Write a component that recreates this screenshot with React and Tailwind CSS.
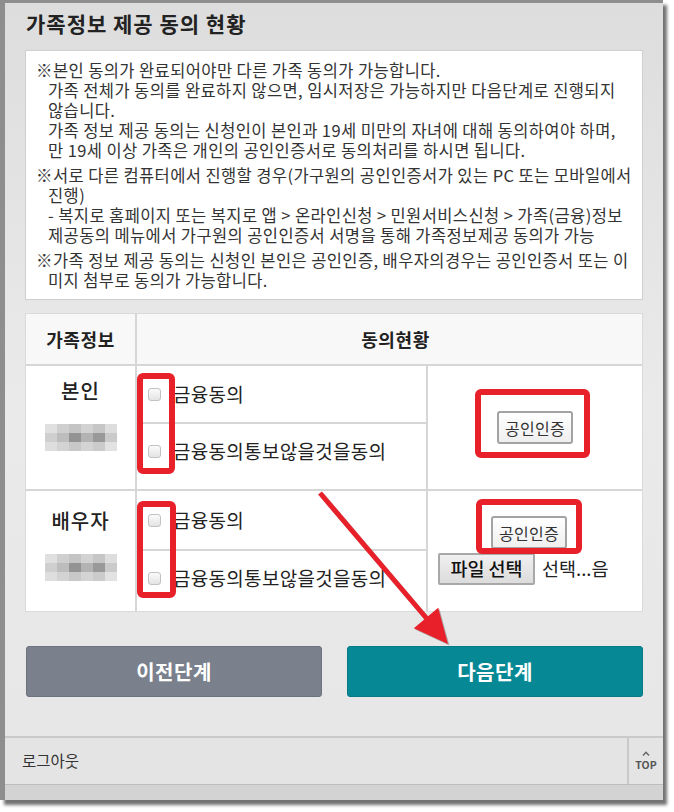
import React from "react";

const P1 = [
  { t: "※본인 동의가 완료되어야만 다른 가족 동의가 가능합니다.", i: false },
  { t: "가족 전체가 동의를 완료하지 않으면, 임시저장은 가능하지만 다음단계로 진행되지", i: true },
  { t: "않습니다.", i: true },
  { t: "가족 정보 제공 동의는 신청인이 본인과 19세 미만의 자녀에 대해 동의하여야 하며,", i: true },
  { t: "만 19세 이상 가족은 개인의 공인인증서로 동의처리를 하시면 됩니다.", i: true },
];
const P2 = [
  { t: "※서로 다른 컴퓨터에서 진행할 경우(가구원의 공인인증서가 있는 PC 또는 모바일에서", i: false },
  { t: "진행)", i: true },
  { t: "- 복지로 홈페이지 또는 복지로 앱 > 온라인신청 > 민원서비스신청 > 가족(금융)정보", i: true },
  { t: "제공동의 메뉴에서 가구원의 공인인증서 서명을 통해 가족정보제공 동의가 가능", i: true },
];
const P3 = [
  { t: "※가족 정보 제공 동의는 신청인 본인은 공인인증, 배우자의경우는 공인인증서 또는 이", i: false },
  { t: "미지 첨부로 동의가 가능합니다.", i: true },
];

function Para({ lines }) {
  return (
    <div>
      {lines.map((l, k) => (
        <div key={k} className={l.i ? "whitespace-nowrap pl-[12px]" : "whitespace-nowrap"}>
          {l.t}
        </div>
      ))}
    </div>
  );
}

function Mosaic() {
  return (
    <div className="grid grid-cols-[repeat(6,12px)] grid-rows-[repeat(3,9px)] blur-[0.7px]">
      <div className="bg-[#e0e0e0]" />
      <div className="bg-[#cfcfcf]" />
      <div className="bg-[#c4c4c4]" />
      <div className="bg-[#d2d2d2]" />
      <div className="bg-[#c6c6c6]" />
      <div className="bg-[#dddddd]" />
      <div className="bg-[#cfcfcf]" />
      <div className="bg-[#bdbdbd]" />
      <div className="bg-[#939393]" />
      <div className="bg-[#b3b3b3]" />
      <div className="bg-[#999999]" />
      <div className="bg-[#cacaca]" />
      <div className="bg-[#dedede]" />
      <div className="bg-[#d3d3d3]" />
      <div className="bg-[#c8c8c8]" />
      <div className="bg-[#d4d4d4]" />
      <div className="bg-[#cbcbcb]" />
      <div className="bg-[#e2e2e2]" />
    </div>
  );
}

function Check({ label, h }) {
  return (
    <div className={`${h} flex items-center pl-[11px] gap-[12px]`}>
      <span className="w-[13px] h-[13px] rounded-[3px] border border-[#c2c2c2] bg-linear-to-b from-[#fafafa] to-[#e4e4e4]" />
      <span className="text-[19px] tracking-[0.3px] text-[#222]">{label}</span>
    </div>
  );
}

function CertBtn() {
  return (
    <button className="w-[76px] h-[33px] rounded-[3px] border-2 border-[#a3a3a3] bg-linear-to-b from-[#ffffff] to-[#efefef] text-[16px] tracking-[0.3px] text-[#333] flex items-center justify-center">
      공인인증
    </button>
  );
}

export default function App() {
  return (
    <div className="relative w-[674px] h-[812px] bg-white font-['Noto_Sans_CJK_KR',sans-serif] overflow-hidden">
      <div className="w-[663px] h-[800px] border-l-[5px] border-t-[3px] border-[#8e8e8e] bg-linear-to-b from-[#dddddd] via-[#eaeaea] to-[#e6e6e6] shadow-[4px_5px_3px_rgba(0,0,0,0.55)] flex flex-col">
        <div className="h-[47px] pt-[5px] pl-[21px] text-[21px] tracking-[1px] leading-[30px] font-bold text-[#222]">
          가족정보 제공 동의 현황
        </div>

        <div className="ml-[20px] w-[618px] h-[250px] bg-white border border-[#cfcfcf] pt-[9px] pl-[10px] text-[16.5px] tracking-[0.4px] leading-[20px] text-[#333] flex flex-col gap-[5px]">
          <Para lines={P1} />
          <Para lines={P2} />
          <Para lines={P3} />
        </div>

        <div className="ml-[20px] mt-[13px] w-[618px] h-[299px] bg-white border border-[#dadada] flex flex-col text-[#222]">
          <div className="h-[52px] flex border-b-2 border-[#d6d6d6] bg-[#f8f8f8] font-bold text-[18px] tracking-[0.6px]">
            <div className="w-[111px] border-r-2 border-[#d6d6d6] flex items-center justify-center">가족정보</div>
            <div className="flex-1 flex items-center justify-center pl-[12px]">동의현황</div>
          </div>

          <div className="h-[125px] flex border-b-2 border-[#d6d6d6]">
            <div className="w-[111px] border-r-2 border-[#d6d6d6] flex flex-col items-center pt-[12px]">
              <div className="text-[20px] tracking-[1px] leading-[26px] font-medium">본인</div>
              <div className="mt-[20px]"><Mosaic /></div>
            </div>
            <div className="w-[291px] border-r-2 border-[#d6d6d6] flex flex-col">
              <div className="border-b-2 border-[#d6d6d6]"><Check label="금융동의" h="h-[56px]" /></div>
              <Check label="금융동의통보않을것을동의" h="flex-1 pb-[10px]" />
            </div>
            <div className="flex-1 flex items-center justify-center">
              <CertBtn />
            </div>
          </div>

          <div className="flex-1 flex">
            <div className="w-[111px] border-r-2 border-[#d6d6d6] flex flex-col items-center pt-[17px]">
              <div className="text-[20px] tracking-[1px] leading-[26px] font-medium">배우자</div>
              <div className="mt-[20px]"><Mosaic /></div>
            </div>
            <div className="w-[291px] border-r-2 border-[#d6d6d6] flex flex-col">
              <div className="border-b-2 border-[#d6d6d6]"><Check label="금융동의" h="h-[58px]" /></div>
              <Check label="금융동의통보않을것을동의" h="flex-1 pb-[6px]" />
            </div>
            <div className="flex-1 flex flex-col pt-[25px]">
              <div className="ml-[63px]"><CertBtn /></div>
              <div className="mt-[4px] ml-[10px] flex items-center gap-[7px]">
                <button className="w-[97px] h-[32px] rounded-[2px] border-2 border-[#a8a8a8] bg-linear-to-b from-[#f0f0f0] to-[#dcdcdc] text-[18.5px] font-medium text-[#111] flex items-center justify-center">
                  파일 선택
                </button>
                <span className="text-[18.5px] text-[#222]">선택...음</span>
              </div>
            </div>
          </div>
        </div>

        <div className="mt-[34px] ml-[21px] flex gap-[25px]">
          <button className="w-[296px] h-[51px] rounded-[3px] bg-[#7a808c] border border-[#6c727e] text-white text-[20px] tracking-[0.5px] font-bold">
            이전단계
          </button>
          <button className="w-[296px] h-[51px] rounded-[3px] bg-[#078995] border border-[#067a85] text-white text-[20px] tracking-[0.5px] font-bold">
            다음단계
          </button>
        </div>

        <div className="mt-[39px] h-[48px] border-t-2 border-[#c9c9c9] bg-[#e4e4e4] flex">
          <div className="flex-1 flex items-center pl-[17px] text-[15.5px] text-[#333]">로그아웃</div>
          <div className="w-[36px] border-l-2 border-[#c9c9c9] flex flex-col items-center justify-center text-[#555] gap-[3px]">
            <svg width="8" height="5" viewBox="0 0 8 5" fill="none" stroke="#666" strokeWidth="1.4">
              <path d="M1 4.5 L4 1.2 L7 4.5" />
            </svg>
            <span className="text-[10.5px] leading-[12px] font-bold">TOP</span>
          </div>
        </div>
        <div className="flex-1 bg-[#d3d3d3] border-t border-[#bdbdbd]" />
      </div>

      <svg className="absolute left-0 top-0 pointer-events-none" width="674" height="812" viewBox="0 0 674 812">
        <g fill="none" stroke="#e8202a" strokeWidth="6" strokeLinejoin="round">
          <rect x="140" y="376" width="32" height="95" rx="3" />
          <rect x="140" y="504" width="33" height="91" rx="3" />
          <rect x="478" y="392" width="109" height="63" rx="3" />
          <rect x="479" y="502" width="100" height="49" rx="3" />
        </g>
        <line x1="321.5" y1="494.5" x2="429" y2="621" stroke="rgba(0,0,0,0.25)" strokeWidth="5" />
        <polygon points="449.5,645.5 439.5,609 415,629.5" fill="rgba(0,0,0,0.25)" />
        <line x1="320" y1="493" x2="428" y2="620" stroke="#e8202a" strokeWidth="5" />
        <polygon points="448,644 438.2,607.7 413.8,628.3" fill="#e8202a" />
      </svg>
    </div>
  );
}
